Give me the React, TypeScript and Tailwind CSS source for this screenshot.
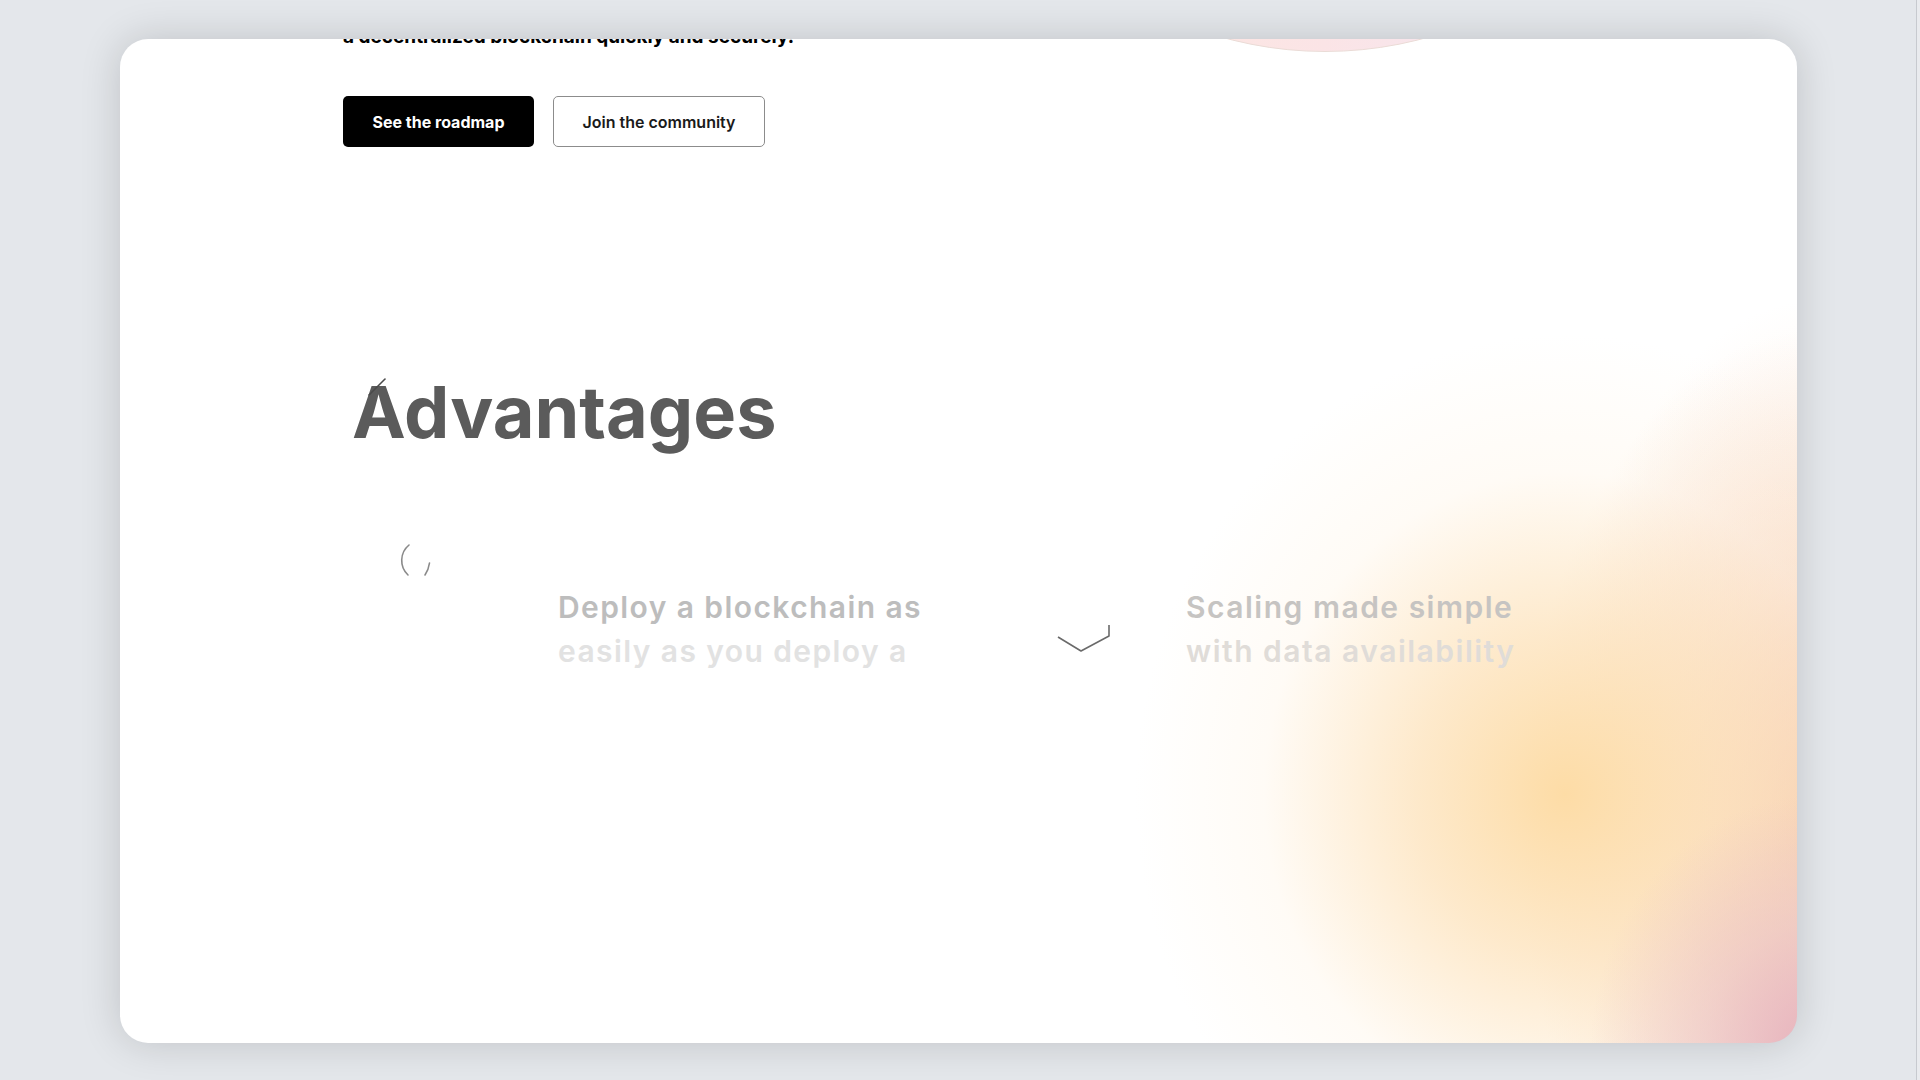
const features = [
  {
    id: 1,
    first: 'Deploy a blockchain as',
    second: 'easily as you deploy a',
  },
  {
    id: 2,
    first: 'Scaling made simple',
    second: 'with data availability',
  },
];

function ArcIcon() {
  return (
    <svg width="40" height="40" viewBox="0 0 40 40" fill="none" className="shrink-0">
      <path d="M9 3 A 20 20 0 0 0 8 33" stroke="#8a8a8a" strokeWidth="1.6" strokeLinecap="round" />
      <path d="M29.5 21 Q 28.5 28 25 33" stroke="#8a8a8a" strokeWidth="1.6" strokeLinecap="round" />
    </svg>
  );
}

function CheckIcon() {
  return (
    <svg width="60" height="32" viewBox="0 0 60 32" fill="none" className="shrink-0">
      <path d="M3 15 L 26 29 L 54 14 L 54 3" stroke="#6a6a6a" strokeWidth="1.6" strokeLinejoin="round" />
    </svg>
  );
}

export default function App() {
  return (
    <div className="flex h-screen w-full overflow-hidden bg-[#e4e7eb] font-['Inter',sans-serif]">
      <main className="flex-1 pl-[120px] pr-[119px] pt-[39px]">
        <div className="relative h-[1004px] overflow-hidden rounded-[28px] bg-white shadow-[0_0_40px_rgba(0,0,0,0.16)] bg-[radial-gradient(ellipse_230px_260px_at_1700px_1015px,rgba(230,176,188,1)_0%,rgba(234,192,196,0.6)_50%,rgba(255,255,255,0)_100%),radial-gradient(ellipse_430px_460px_at_1445px_755px,rgba(253,220,166,1)_0%,rgba(253,226,186,0.75)_35%,rgba(255,242,224,0.3)_70%,rgba(255,255,255,0)_100%),radial-gradient(ellipse_300px_500px_at_1700px_790px,rgba(243,192,160,0.95)_0%,rgba(246,206,178,0.5)_50%,rgba(255,255,255,0)_100%),radial-gradient(ellipse_240px_380px_at_1700px_640px,rgba(250,218,192,0.5)_0%,rgba(255,255,255,0)_100%)]">
          {/* faint pastel disc peeking in at the top */}
          <div className="absolute left-[825px] top-[-747px] h-[760px] w-[760px] rounded-full border border-[#eadbd6] bg-[linear-gradient(90deg,#fdeadc_0%,#fbe4e6_50%,#eeeafb_100%)]" />

          <div className="relative pl-[223px]">
            <p className="-mt-[16px] text-[19px] font-bold leading-[28px] text-black">
              a decentralized blockchain quickly and securely.
            </p>

            <div className="mt-[45px] flex gap-[19px]">
              <button className="h-[51px] w-[191px] rounded-[5px] bg-black text-[16px] font-bold text-white">
                See the roadmap
              </button>
              <button className="h-[51px] w-[212px] rounded-[5px] border-[1.5px] border-[#8c8c8c] bg-white text-[16px] font-semibold text-[#1a1a1a]">
                Join the community
              </button>
            </div>

            <div className="relative mt-[229px] ml-[9px]">
              <h2 className="text-[72px] font-bold leading-[72px] text-[#5b5b5b]">Advantages</h2>
              <svg width="24" height="22" viewBox="0 0 24 22" className="absolute left-[14px] top-[1px]">
                <path d="M3 18 L 19 2" stroke="#4a4a4a" strokeWidth="1.6" strokeLinecap="round" />
              </svg>
            </div>
          </div>

          <div className="mt-[94px] flex items-start pl-[280px]">
            <ArcIcon />
            <div className="ml-[118px] mt-[43px] w-[380px] text-[30px] font-semibold leading-[44px] tracking-[0.047em]">
              <div className="text-[#bdbdbd]">{features[0].first}</div>
              <div className="text-[#e2e2e2]">{features[0].second}</div>
            </div>
            <div className="ml-[117px] mt-[80px]">
              <CheckIcon />
            </div>
            <div className="ml-[71px] mt-[43px] text-[30px] font-semibold leading-[44px] tracking-[0.05em]">
              <div className="text-[#c6c4c2]">{features[1].first}</div>
              <div className="text-[#e0dcd8]">{features[1].second}</div>
            </div>
          </div>
        </div>
      </main>
      <div className="w-[4px] border-l border-[#c7cacf] bg-[#e9ebee]" />
    </div>
  );
}
